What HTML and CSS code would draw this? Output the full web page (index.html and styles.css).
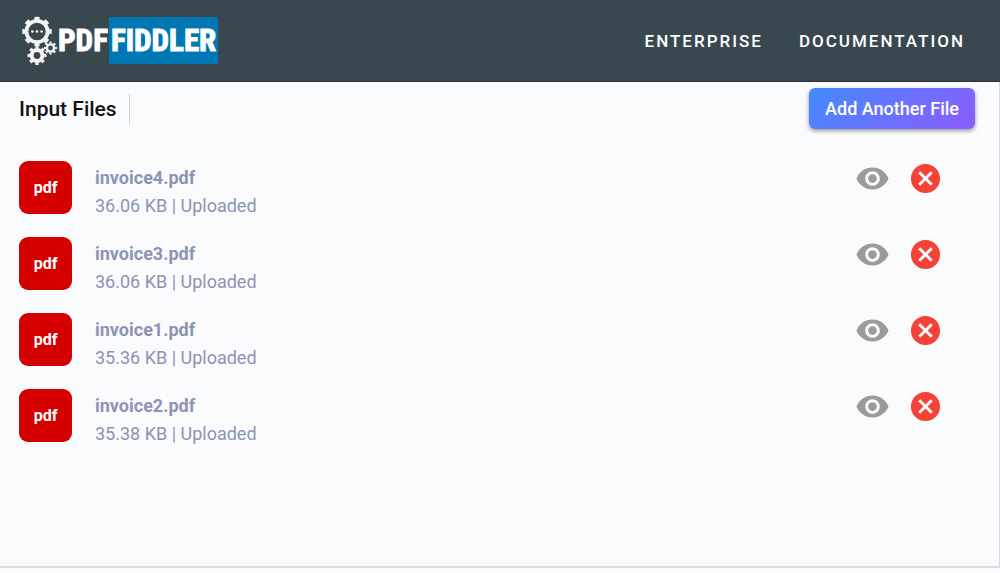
FILE: index.html
```
<!DOCTYPE html>
<html lang="en">
<head>
    <meta charset="UTF-8">
    <meta name="viewport" content="width=device-width, initial-scale=1.0">
    <title>PDF Fiddler</title>
    <link rel="stylesheet" href="styles.css">
</head>
<body>
    <!-- shared icons -->
    <svg class="icon-defs" aria-hidden="true">
        <symbol id="icon-eye" viewBox="0 0 24 24">
            <path d="M12 4.5C7 4.5 2.73 7.61 1 12c1.73 4.39 6 7.5 11 7.5s9.27-3.11 11-7.5c-1.73-4.39-6-7.5-11-7.5zM12 17c-2.76 0-5-2.24-5-5s2.24-5 5-5 5 2.24 5 5-2.24 5-5 5zm0-8c-1.66 0-3 1.34-3 3s1.34 3 3 3 3-1.34 3-3-1.34-3-3-3z"/>
        </symbol>
        <symbol id="icon-cancel" viewBox="0 0 24 24">
            <path d="M12 2C6.47 2 2 6.47 2 12s4.47 10 10 10 10-4.47 10-10S17.53 2 12 2zm5 13.59L15.59 17 12 13.41 8.41 17 7 15.59 10.59 12 7 8.41 8.41 7 12 10.59 15.59 7 17 8.41 13.41 12 17 15.59z"/>
        </symbol>
    </svg>

    <header class="navbar">
        <a class="logo" href="#">
            <svg class="gears" viewBox="0 0 38 50" aria-hidden="true">
                <circle class="teeth" cx="17" cy="15.5" r="13" stroke-width="3.6" pathLength="16" stroke-dasharray="1 1" stroke-dashoffset="0.5"/>
                <circle class="ring" cx="17" cy="15.5" r="10.6" stroke-width="3.8"/>
                <circle class="teeth" cx="17" cy="39.5" r="8" stroke-width="3" pathLength="16" stroke-dasharray="1 1" stroke-dashoffset="0.5"/>
                <circle class="ring" cx="17" cy="39.5" r="5.4" stroke-width="4"/>
                <circle class="teeth" cx="30.5" cy="32" r="5.4" stroke-width="2.4" pathLength="16" stroke-dasharray="1 1" stroke-dashoffset="0.5"/>
                <circle class="ring" cx="30.5" cy="32" r="3.6" stroke-width="2.4"/>
                <circle class="dot" cx="12.4" cy="15.5" r="1.3"/>
                <circle class="dot" cx="17" cy="15.5" r="1.3"/>
                <circle class="dot" cx="21.6" cy="15.5" r="1.3"/>
            </svg>
            <span class="logo-pdf">PDF</span>
            <span class="logo-fiddler">FIDDLER</span>
        </a>
        <nav class="nav-links">
            <a href="#">ENTERPRISE</a>
            <a href="#">DOCUMENTATION</a>
        </nav>
    </header>

    <main class="files-panel">
        <div class="panel-header">
            <h1>Input Files</h1>
            <button type="button" class="add-button">Add Another File</button>
        </div>

        <ul class="file-list">
            <li class="file">
                <div class="file-type">pdf</div>
                <div class="file-info">
                    <strong>invoice4.pdf</strong>
                    <span>36.06 KB | Uploaded</span>
                </div>
                <div class="file-actions">
                    <button type="button" class="view" aria-label="View invoice4.pdf"><svg><use href="#icon-eye"/></svg></button>
                    <button type="button" class="remove" aria-label="Remove invoice4.pdf"><svg><use href="#icon-cancel"/></svg></button>
                </div>
            </li>
            <li class="file">
                <div class="file-type">pdf</div>
                <div class="file-info">
                    <strong>invoice3.pdf</strong>
                    <span>36.06 KB | Uploaded</span>
                </div>
                <div class="file-actions">
                    <button type="button" class="view" aria-label="View invoice3.pdf"><svg><use href="#icon-eye"/></svg></button>
                    <button type="button" class="remove" aria-label="Remove invoice3.pdf"><svg><use href="#icon-cancel"/></svg></button>
                </div>
            </li>
            <li class="file">
                <div class="file-type">pdf</div>
                <div class="file-info">
                    <strong>invoice1.pdf</strong>
                    <span>35.36 KB | Uploaded</span>
                </div>
                <div class="file-actions">
                    <button type="button" class="view" aria-label="View invoice1.pdf"><svg><use href="#icon-eye"/></svg></button>
                    <button type="button" class="remove" aria-label="Remove invoice1.pdf"><svg><use href="#icon-cancel"/></svg></button>
                </div>
            </li>
            <li class="file">
                <div class="file-type">pdf</div>
                <div class="file-info">
                    <strong>invoice2.pdf</strong>
                    <span>35.38 KB | Uploaded</span>
                </div>
                <div class="file-actions">
                    <button type="button" class="view" aria-label="View invoice2.pdf"><svg><use href="#icon-eye"/></svg></button>
                    <button type="button" class="remove" aria-label="Remove invoice2.pdf"><svg><use href="#icon-cancel"/></svg></button>
                </div>
            </li>
        </ul>
    </main>
</body>
</html>
```
FILE: styles.css
```
* {
    box-sizing: border-box;
}

body {
    margin: 0;
    min-height: 100vh;
    padding-bottom: 5px;
    display: flex;
    flex-direction: column;
    font-family: Roboto, "Liberation Sans", sans-serif;
    background-color: #fafbfd;
}

.icon-defs {
    display: none;
}

.navbar {
    display: flex;
    justify-content: space-between;
    align-items: center;
    height: 82px;
    padding: 0 35px 0 20px;
    background-color: #39474f;
    border-bottom: 1px solid #263238;
}

.logo {
    display: flex;
    align-items: center;
    color: #fff;
    font-family: "Roboto Condensed", "Liberation Sans Narrow", sans-serif;
    font-size: 31px;
    font-weight: 700;
    line-height: 47px;
    text-decoration: none;
    -webkit-text-stroke: 1px #fff;
}

.gears {
    width: 38px;
    height: 50px;
}

.gears .ring,
.gears .teeth {
    fill: none;
    stroke: #f4f4f4;
}

.gears .dot {
    fill: #f4f4f4;
}

.logo-fiddler {
    margin-left: 1px;
    padding: 0 2px;
    background-color: #0077b5;
}

.nav-links {
    display: flex;
    gap: 36px;
}

.nav-links a {
    color: #fff;
    font-size: 17px;
    font-weight: 500;
    letter-spacing: 2px;
    text-decoration: none;
}

.files-panel {
    flex: 1;
    padding: 6px 24px 24px 19px;
    border-right: 1px solid #d8dadd;
    border-bottom: 2px solid #dcdddf;
}

.panel-header {
    display: flex;
    justify-content: space-between;
    align-items: center;
}

h1 {
    margin: 0;
    padding-right: 12px;
    border-right: 1px solid #ccced2;
    font-size: 21px;
    font-weight: 500;
    line-height: 30px;
    color: #111;
}

.add-button {
    height: 41px;
    padding: 0 16px;
    border: none;
    border-radius: 6px;
    background: linear-gradient(135deg, #448aff, #8c5cff);
    box-shadow: 0 2px 4px rgba(0, 0, 0, 0.4);
    color: #fff;
    font-family: inherit;
    font-size: 18px;
    font-weight: 500;
    cursor: pointer;
}

.file-list {
    display: flex;
    flex-direction: column;
    gap: 17px;
    margin: 32px 0 0;
    padding: 0 32px 0 0;
    list-style: none;
}

.file {
    display: flex;
    align-items: flex-start;
    gap: 23px;
}

.file-type {
    width: 53px;
    height: 53px;
    border-radius: 9px;
    background-color: #d50000;
    color: #fff;
    font-size: 16px;
    font-weight: 700;
    line-height: 53px;
    text-align: center;
}

.file-info {
    display: flex;
    flex: 1;
    flex-direction: column;
    padding-top: 3px;
    color: #8a94b4;
    font-size: 18px;
    line-height: 28px;
}

.file-actions {
    display: flex;
    gap: 18px;
}

.file-actions button {
    width: 35px;
    height: 35px;
    padding: 0;
    border: none;
    background: none;
    cursor: pointer;
}

.file-actions svg {
    display: block;
    width: 35px;
    height: 35px;
}

.view {
    fill: #9b9b9b;
}

.remove {
    fill: #f44336;
}
```
